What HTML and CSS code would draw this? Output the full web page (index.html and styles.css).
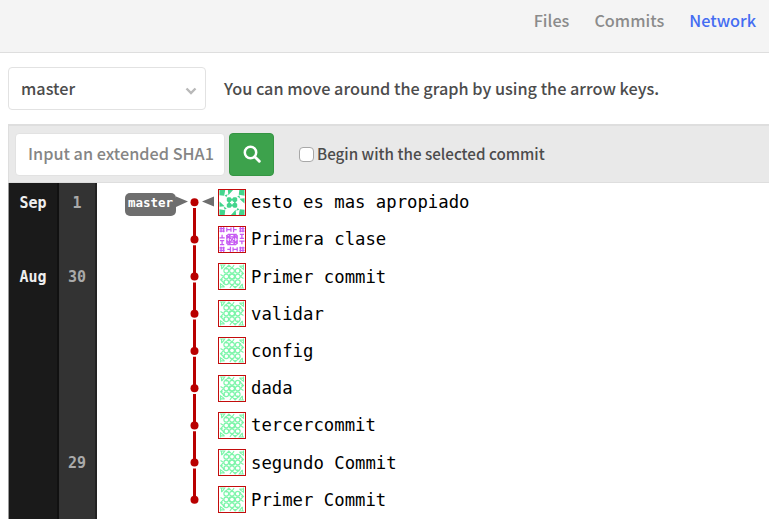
FILE: index.html
```html
<!DOCTYPE html>
<html lang="en">
<head>
<meta charset="utf-8">
<title>Network</title>
<link rel="stylesheet" href="styles.css">
</head>
<body>
<svg class="defs" aria-hidden="true">
  <symbol id="av-a" viewBox="0 0 24 24">
    <g fill="#43d58d">
      <g id="a-corner"><path d="M0 0h5.500l-1 5.500L0 5zM8 0h5l-4.500 5zM5 5l3-1-1.500 3z"/><path d="M7 8l1-1h2.500l1 1.500v2l-1 1H8l-1-1z"/></g>
      <use href="#a-corner" transform="rotate(90 12 12)"/>
      <use href="#a-corner" transform="rotate(180 12 12)"/>
      <use href="#a-corner" transform="rotate(270 12 12)"/>
      <path d="M8.500 10h1.500v4H8.500zM14 10h1.500v4H14zM10 8.500h4V10h-4zM10 14h4v1.500h-4z"/>
    </g>
  </symbol>
  <symbol id="av-b" viewBox="0 0 24 24">
    <g id="b-q" fill="none" stroke="#c65af2" stroke-width="1.200">
      <path d="M0 1.500h5M1.500 0v5M4 0v5M0 4h5M7 .5v4M7 2.500h4M11 .5v4M13.500 0v5M13.500 2.500h3"/>
      <path d="M7 8.500L8.500 7H12M7 12V8.500L12 12M7 11l4-4M9.500 7v5M7 9.500h5"/>
    </g>
    <use href="#b-q" transform="rotate(90 12 12)"/>
    <use href="#b-q" transform="rotate(180 12 12)"/>
    <use href="#b-q" transform="rotate(270 12 12)"/>
  </symbol>
  <symbol id="av-c" viewBox="0 0 24 24">
    <g id="c-q" fill="none" stroke="#7df5aa" stroke-width="1.100">
      <path d="M.5 1h4.500L2.500 4.500M2 1v4M6 4l3-3 3 3M9 1v2M14 1l-2 3M7 5L5 3.500M9.500 9.500L12 12"/>
      <circle cx="6.500" cy="6.500" r="2.300"/><circle cx="12" cy="6.500" r="2.300"/><circle cx="12" cy="12" r="2.300"/>
    </g>
    <use href="#c-q" transform="rotate(90 12 12)"/>
    <use href="#c-q" transform="rotate(180 12 12)"/>
    <use href="#c-q" transform="rotate(270 12 12)"/>
    <circle cx="12" cy="12" r="1.700" fill="#fff"/>
  </symbol>
</svg>

<nav class="tabs">
  <a>Files</a><a>Commits</a><a class="active">Network</a>
</nav>

<main>
  <div class="ref-row">
    <div class="ref-select"><span>master</span>
      <svg width="12" height="8" viewBox="0 0 12 8"><path d="M1.500 1.500L6 6l4.500-4.500" fill="none" stroke="#b9b9b9" stroke-width="2.400"/></svg>
    </div>
    <p class="hint">You can move around the graph by using the arrow keys.</p>
  </div>

  <div class="controls">
    <div class="sha"><span>Input an extended SHA1</span></div>
    <button class="search" aria-label="Search">
      <svg width="18" height="18" viewBox="0 0 18 18" fill="none" stroke="#fff"><circle cx="7.500" cy="7.500" r="5.700" stroke-width="2.500"/><path d="M11.700 11.700l4.600 4.600" stroke-width="2.900" stroke-linecap="round"/></svg>
    </button>
    <label class="begin"><i class="box"></i><span>Begin with the selected commit</span></label>
  </div>

  <div class="network">
    <div class="months"><b>Sep</b><b></b><b>Aug</b></div>
    <div class="days"><b>1</b><b></b><b>30</b><b></b><b></b><b></b><b></b><b>29</b></div>
    <div class="branch"><span class="tag">master</span></div>
    <svg class="graph" width="42" height="336" viewBox="0 0 42 336">
      <path d="M0 13.500L12 18.500 0 24zM38 13.500v10L26 18.500z" fill="#6e6e6e"/>
      <path d="M18.500 25v297" stroke="#b90000" stroke-width="3" stroke-dasharray="34.200 3"/>
      <g fill="#b90000">
        <circle cx="18.500" cy="19.200" r="4"/><circle cx="18.500" cy="56.400" r="4"/><circle cx="18.500" cy="93.600" r="4"/>
        <circle cx="18.500" cy="130.800" r="4"/><circle cx="18.500" cy="168" r="4"/><circle cx="18.500" cy="205.200" r="4"/>
        <circle cx="18.500" cy="242.400" r="4"/><circle cx="18.500" cy="279.600" r="4"/><circle cx="18.500" cy="316.800" r="4"/>
      </g>
    </svg>
    <ul class="commits">
      <li><svg><use href="#av-a"/></svg><span>esto es mas apropiado</span></li>
      <li><svg><use href="#av-b"/></svg><span>Primera clase</span></li>
      <li><svg><use href="#av-c"/></svg><span>Primer commit</span></li>
      <li><svg><use href="#av-c"/></svg><span>validar</span></li>
      <li><svg><use href="#av-c"/></svg><span>config</span></li>
      <li><svg><use href="#av-c"/></svg><span>dada</span></li>
      <li><svg><use href="#av-c"/></svg><span>tercercommit</span></li>
      <li><svg><use href="#av-c"/></svg><span>segundo Commit</span></li>
      <li><svg><use href="#av-c"/></svg><span>Primer Commit</span></li>
    </ul>
  </div>
</main>
</body>
</html>
```
FILE: styles.css
```css
* { box-sizing: border-box; }
body {
  margin: 0;
  height: 520px;
  overflow: hidden;
  background: #fff;
  color: #4c4c4c;
  font: 500 16.25px/24px "Noto Sans CJK SC", sans-serif;
  white-space: nowrap;
}
.defs { display: block; width: 0; height: 0; }
.tabs {
  display: flex;
  justify-content: flex-end;
  gap: 25px;
  height: 53px;
  padding: 8px 13px 0 0;
  background: #f4f4f4;
  border-bottom: 1px solid #dedede;
  color: #8b8b8b;
}
.tabs .active { color: #446df2; }
main { padding: 14px 0 0 8px; }
.ref-row { display: flex; gap: 18px; align-items: center; height: 43px; }
.ref-select {
  display: flex;
  align-items: center;
  justify-content: space-between;
  width: 198px;
  height: 43px;
  padding: 0 8px 0 12px;
  border: 1px solid #e2e2e2;
  border-radius: 4px;
}
.ref-select span { margin-bottom: 2px; }
.ref-select svg { margin-top: 5px; }
.hint { margin: 0 0 2px; }
.controls {
  display: flex;
  align-items: center;
  height: 59px;
  margin-top: 14px;
  padding-left: 6px;
  background: #e9e9e9;
  border: solid #dedede;
  border-width: 2px 0 1px 1px;
}
.sha {
  width: 210px;
  height: 43px;
  padding: 7px 8px 0 12px;
  background: #fff;
  border: 1px solid #e2e2e2;
  border-radius: 4px;
  color: #858585;
}
.search {
  display: flex;
  align-items: center;
  justify-content: center;
  width: 45px;
  height: 43px;
  margin-left: 4px;
  padding: 0;
  border: 1px solid #359543;
  border-radius: 4px;
  background: #3da24c;
}
.begin { display: flex; align-items: center; gap: 3px; margin-left: 25px; font-size: 15.2px; }
.begin span { margin-bottom: 2px; }
.box {
  width: 15px;
  height: 15px;
  border: 1px solid #a8a8a8;
  border-radius: 4px;
  background: #fff;
}
.network {
  display: grid;
  grid-template-columns: 51px 38px 79px 42px 1fr;
  height: 336px;
  font-family: "DejaVu Sans Mono", monospace;
}
.months, .days {
  display: grid;
  grid-template-rows: repeat(9, 37.2px);
  align-items: center;
  padding-top: 1px;
  text-align: center;
  font-size: 15px;
}
.months { background: #1a1a1a; color: #eee; border-right: 2px solid #111; border-left: 1px solid #999; }
.days { background: #333; color: #aaa; border-right: 2px solid #222; }
.branch { display: flex; justify-content: flex-end; align-items: flex-start; }
.tag {
  width: 51px;
  height: 23px;
  margin-top: 10px;
  border-radius: 5px;
  background: #6e6e6e;
  color: #fff;
  font: bold 12.5px/19px "DejaVu Sans Mono", monospace;
  text-align: center;
}
.commits {
  display: grid;
  grid-template-rows: repeat(9, 37.2px);
  margin: 0;
  padding: 0.6px 0 0;
  list-style: none;
  color: #000;
  font-size: 17.3px;
  font-weight: 400;
}
.commits li { display: flex; align-items: center; gap: 5px; }
.commits svg { width: 28px; height: 27px; border: 1px solid #c30c0c; }
```
